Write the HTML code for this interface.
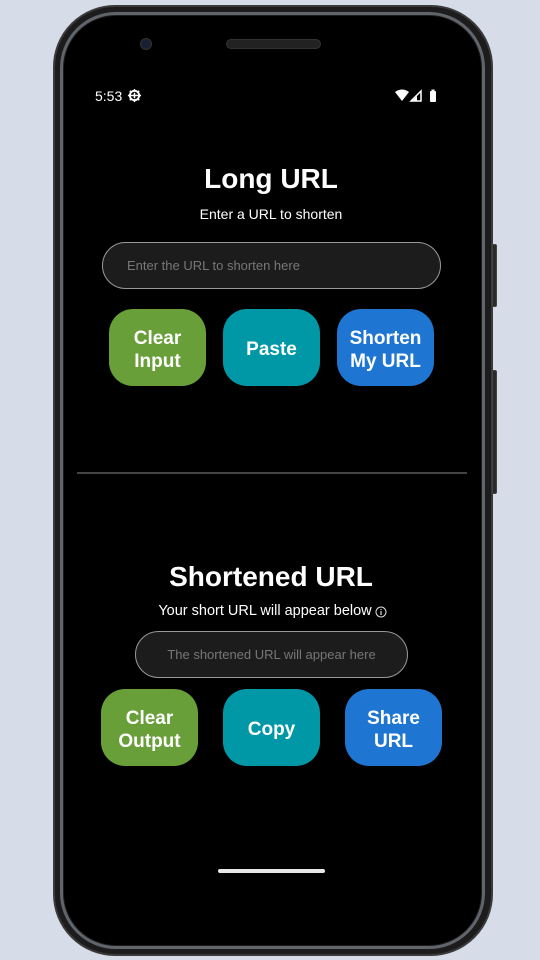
<!DOCTYPE html>
<html><head><meta charset="utf-8"><style>
*{margin:0;padding:0;box-sizing:border-box}
body{width:540px;height:960px;background:#d7dde8;position:relative;overflow:hidden;font-family:"Liberation Sans",sans-serif}
.phone{position:absolute;left:53px;top:5px;width:440px;height:951px;border-radius:62px;background:#1c1c1c;border:2px solid #3a3a3a}
.rim{position:absolute;left:60px;top:12px;width:425px;height:937px;border-radius:56px;border:3px solid #60646b}
.screen{position:absolute;left:64px;top:16px;width:417px;height:929px;border-radius:52px;background:#000;overflow:hidden}
.btnside{position:absolute;left:492px;width:5px;background:#2a2a2a;border-radius:0 2px 2px 0;border:1px solid #444}
.t{position:absolute;color:#fff;text-align:center}
.btn{position:absolute;width:97px;height:77px;border-radius:24px;color:#fff;font-weight:bold;font-size:19px;line-height:23px;display:flex;align-items:center;justify-content:center;text-align:center;padding-top:4px}
.g{background:#689f38}.c{background:#0097a7}.b{background:#1e76d2}
.field{position:absolute;border:1px solid #9a9a9a;background:#1c1c1c;color:#777;font-size:13px;display:flex;align-items:center}
</style></head><body>
<div class="phone"></div><div class="rim"></div>
<div class="btnside" style="top:244px;height:63px"></div>
<div class="btnside" style="top:370px;height:124px"></div>
<div class="screen"></div>
<div style="position:absolute;left:140px;top:38px;width:12px;height:12px;border-radius:50%;background:#1a1f33;border:1px solid #333"></div>
<div style="position:absolute;left:226px;top:39px;width:95px;height:10px;border-radius:5px;background:#222;border:1px solid #333"></div>
<div class="t" style="left:95px;top:88px;font-size:14px">5:53</div>
<svg style="position:absolute;left:127px;top:88px" width="15" height="15" viewBox="0 0 16 16"><circle cx="8" cy="8" r="5" fill="none" stroke="#fff" stroke-width="2"/><path d="M8 1v3M8 12v3M1 8h3M12 8h3M3 3l2 2M11 11l2 2M3 13l2-2M11 5l2-2M4 8h8M8 5v6" stroke="#fff" stroke-width="1.6"/></svg>
<svg style="position:absolute;left:395px;top:89px" width="46" height="14" viewBox="0 0 46 14"><path d="M0 3Q7-2 14 3L7 12Z" fill="#fff"/><path d="M26 2V12H16Z" fill="none" stroke="#fff" stroke-width="1.5"/><path d="M22 7V12H17Z" fill="#fff"/><rect x="35" y="2" width="6" height="11" rx="1" fill="#fff"/><rect x="36.5" y="0.5" width="3" height="2" fill="#fff"/></svg>
<div class="t" style="left:0;width:542px;top:163px;font-size:28px;font-weight:bold">Long URL</div>
<div class="t" style="left:0;width:542px;top:206px;font-size:14px">Enter a URL to shorten</div>
<div class="field" style="left:102px;top:242px;width:339px;height:47px;border-radius:24px;padding-left:24px">Enter the URL to shorten here</div>
<div class="btn g" style="left:109px;top:309px">Clear<br>Input</div>
<div class="btn c" style="left:223px;top:309px">Paste</div>
<div class="btn b" style="left:337px;top:309px">Shorten<br>My URL</div>
<div style="position:absolute;left:77px;top:472px;width:390px;height:2px;background:#444"></div>
<div class="t" style="left:0;width:542px;top:561px;font-size:28px;font-weight:bold">Shortened URL</div>
<div class="t" style="left:0;width:530px;top:603px;font-size:14.5px">Your short URL will appear below</div>
<svg style="position:absolute;left:375px;top:606px" width="12" height="12" viewBox="0 0 12 12"><circle cx="6" cy="6" r="5" fill="none" stroke="#ddd" stroke-width="1"/><path d="M6 5v4M6 3v1" stroke="#ddd" stroke-width="1.2"/></svg>
<div class="field" style="left:135px;top:631px;width:273px;height:47px;border-radius:24px;justify-content:center">The shortened URL will appear here</div>
<div class="btn g" style="left:101px;top:689px">Clear<br>Output</div>
<div class="btn c" style="left:223px;top:689px">Copy</div>
<div class="btn b" style="left:345px;top:689px">Share<br>URL</div>
<div style="position:absolute;left:218px;top:869px;width:107px;height:4px;border-radius:2px;background:#e8e8e8"></div>
</body></html>
